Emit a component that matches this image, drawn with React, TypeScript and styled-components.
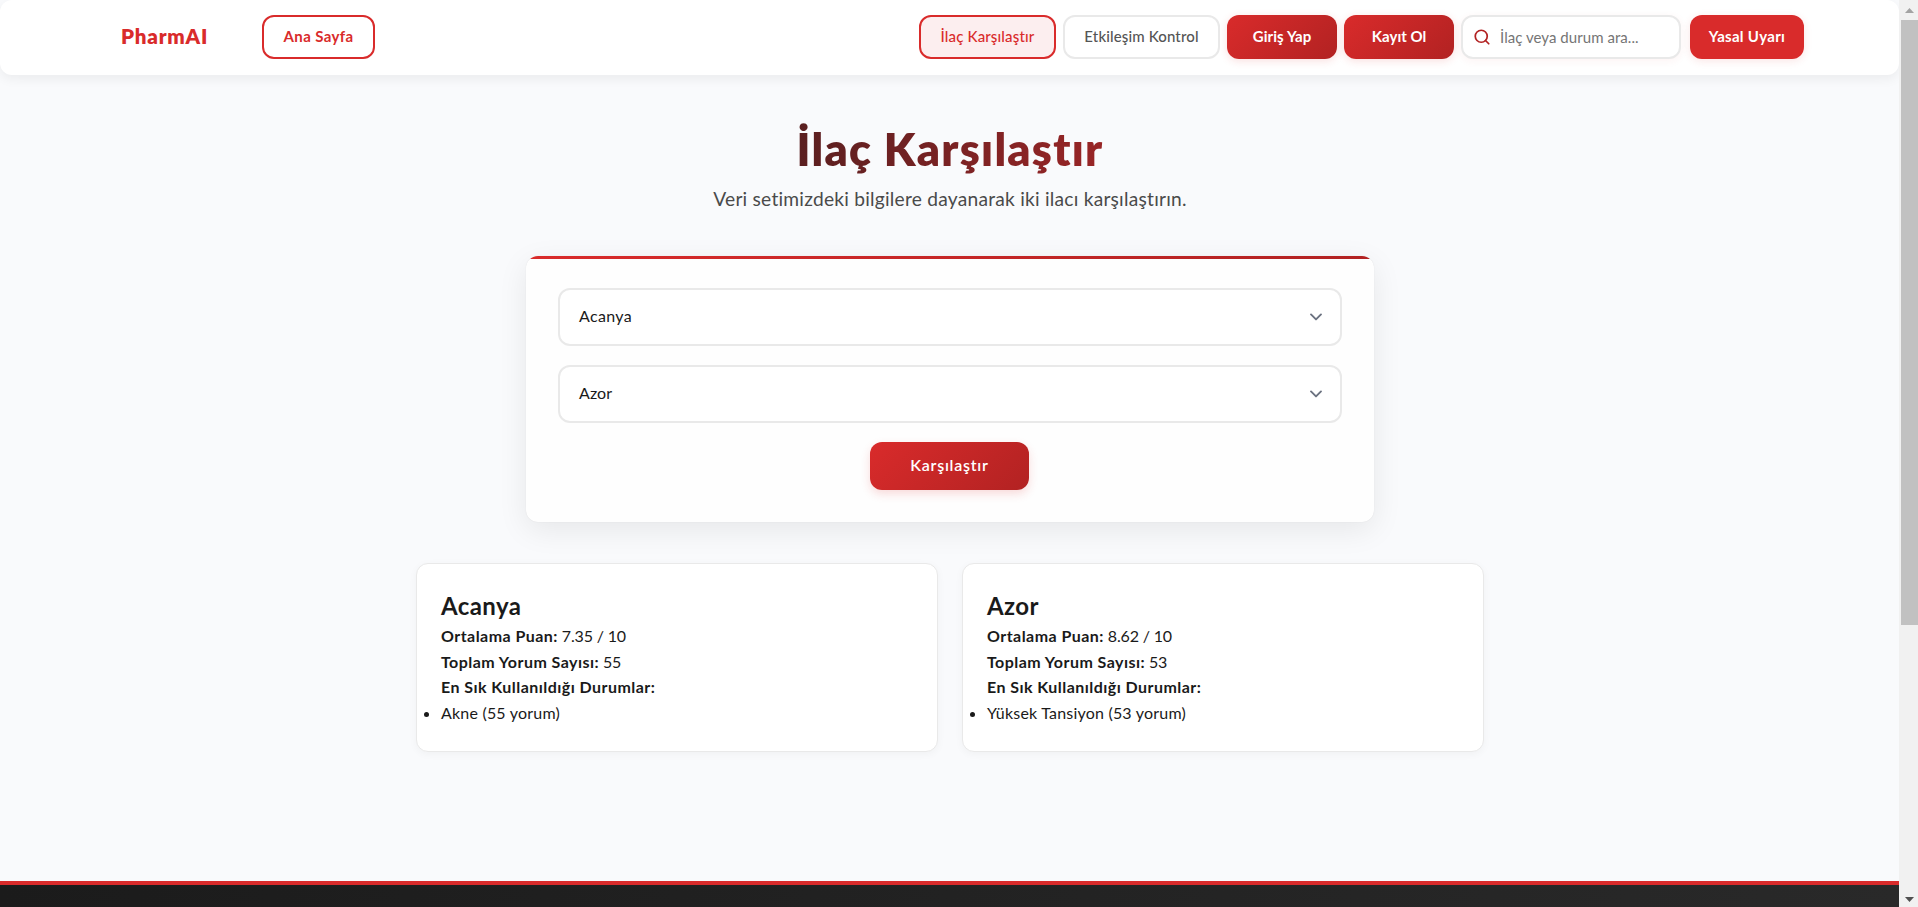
import React from "react";
import styled, { createGlobalStyle, css } from "styled-components";
import { Search } from "lucide-react";

const GlobalStyle = createGlobalStyle`
  *, *::before, *::after { box-sizing: border-box; }
  html, body { margin: 0; padding: 0; overflow: hidden; }
  body {
    background: #f9fafc;
    color: #1a1a1a;
    font-family: Lato, "Open Sans", sans-serif;
    font-size: 16px;
    line-height: 1.6;
    font-variant-ligatures: none;
  }
  h1, h2, p, ul { margin: 0; padding: 0; }
`;

const red = "#d92b2b";
const line = "#e9e9e9";
const redGradient = "linear-gradient(135deg, #d92b2b 0%, #b22222 100%)";

const Shell = styled.div`
  display: grid;
  grid-template-columns: 1fr 19px;
  height: 907px;
`;

const Page = styled.div`
  display: flex;
  flex-direction: column;
  min-width: 0;
  overflow: hidden;
`;

const Header = styled.header`
  flex: none;
  height: 75px;
  padding: 15px 95px 16px 121px;
  display: flex;
  background: #fff;
  border-radius: 12px;
  box-shadow: 0 4px 12px rgba(0, 0, 0, 0.06);
`;

const Brand = styled.div`
  width: 141px;
  padding-bottom: 2px;
  line-height: 42px;
  font-size: 20.5px;
  font-weight: 800;
  letter-spacing: 0.8px;
  color: ${red};
`;

const Nav = styled.nav`
  margin-left: auto;
  display: flex;
  gap: 7px;
`;

type Variant = "outline" | "active" | "plain" | "gradient" | "solid";

const variants = {
  outline: css`border-color: ${red}; color: ${red}; background: #fff; font-weight: 700;`,
  active: css`border-color: ${red}; color: ${red}; background: #fceeef; font-weight: 500;`,
  plain: css`border-color: ${line}; color: #555; background: #fff; font-weight: 500;`,
  gradient: css`border: 0; color: #fff; background: ${redGradient}; font-weight: 700;
    box-shadow: 0 2px 8px rgba(217, 43, 43, 0.15);`,
  solid: css`border: 0; color: #fff; background: ${red}; font-weight: 700;
    box-shadow: 0 2px 8px rgba(217, 43, 43, 0.12);`,
};

const NavButton = styled.button<{ $variant: Variant; $width: number; $track?: number }>`
  width: ${(p) => p.$width}px;
  height: 44px;
  padding: 0 0 3px;
  border: 2px solid transparent;
  border-radius: 12px;
  font-family: inherit;
  font-size: 15px;
  letter-spacing: ${(p) => p.$track ?? 0}px;
  white-space: nowrap;
  ${(p) => variants[p.$variant]}
`;

const SearchBox = styled.label`
  width: 220px;
  height: 44px;
  margin-right: 2px;
  padding: 0 11px 1px 10px;
  display: flex;
  align-items: center;
  gap: 9px;
  border: 2px solid ${line};
  border-radius: 12px;
  background: #fff;
  color: #b22222;
  box-shadow: 0 2px 8px rgba(217, 43, 43, 0.06);
  svg { flex: none; }
`;

const SearchInput = styled.input`
  flex: 1;
  min-width: 0;
  padding: 0;
  border: 0;
  outline: 0;
  background: transparent;
  font: 400 15px Lato, sans-serif;
  letter-spacing: 0.05px;
  &::placeholder { color: #757575; opacity: 1; }
`;

const Main = styled.main`
  flex: none;
  height: 806px;
  padding: 44px 0 0 1px;
  display: flex;
  flex-direction: column;
  align-items: center;
`;

const Title = styled.h1`
  font-size: 45px;
  line-height: 60px;
  font-weight: 800;
  letter-spacing: 1.25px;
  background: linear-gradient(100deg, #591f20 0%, #992526 100%);
  background-clip: text;
  -webkit-background-clip: text;
  color: transparent;
`;

const Subtitle = styled.p`
  margin-top: 5px;
  font-size: 19.2px;
  line-height: 30px;
  letter-spacing: 0.23px;
  color: #4a4a4a;
`;

const FormCard = styled.section`
  width: 848px;
  height: 266px;
  margin-top: 42px;
  padding: 32px;
  display: flex;
  flex-direction: column;
  align-items: center;
  gap: 19px;
  border-radius: 12px;
  background: #fefefe;
  box-shadow: 0 8px 30px rgba(0, 0, 0, 0.08), 0 0 1px rgba(0, 0, 0, 0.12);
  overflow: hidden;
  &::before {
    content: "";
    flex: none;
    align-self: stretch;
    height: 3px;
    margin: -32px -32px 10px;
    background: linear-gradient(90deg, #d92b2b, #b22222);
  }
`;

const SelectBox = styled.div<{ $track: number }>`
  flex: none;
  width: 784px;
  height: 58px;
  padding: 0 14px 2px 19px;
  display: flex;
  align-items: center;
  justify-content: space-between;
  border: 2px solid ${line};
  border-radius: 12px;
  background: #fff;
  letter-spacing: ${(p) => p.$track}px;
`;

const CompareButton = styled.button`
  flex: none;
  width: 159px;
  height: 48px;
  margin-right: 1px;
  padding: 0 0 3px;
  border: 0;
  border-radius: 12px;
  background: ${redGradient};
  box-shadow: 0 4px 10px rgba(217, 43, 43, 0.17);
  color: #fff;
  font-family: inherit;
  font-size: 16px;
  font-weight: 600;
  letter-spacing: 0.75px;
`;

const Results = styled.div`
  margin-top: 41px;
  display: grid;
  grid-template-columns: 522px 522px;
  gap: 24px;
`;

const ResultCard = styled.article`
  height: 189px;
  padding: 24px;
  border: 1px solid ${line};
  border-radius: 12px;
  background: #fff;
  box-shadow: 0 2px 8px rgba(0, 0, 0, 0.04);
`;

const DrugName = styled.h2`
  margin-bottom: -1px;
  font-size: 24px;
  line-height: 36px;
  font-weight: 700;
  letter-spacing: 0.4px;
`;

const Fact = styled.p`
  line-height: 25.6px;
  letter-spacing: -0.15px;
  strong { font-weight: 700; letter-spacing: 0.45px; }
`;

const Conditions = styled.ul`
  line-height: 25.6px;
  letter-spacing: 0.2px;
`;

const Footer = styled.footer`
  flex: 1;
  border-top: 4px solid ${red};
  background: linear-gradient(90deg, #1b1b1b, #292929);
`;

const ScrollTrack = styled.div`
  padding: 8px 0 5px 2px;
  display: flex;
  flex-direction: column;
  align-items: center;
  background: #f1f1f1;
`;

const Thumb = styled.div`
  width: 17px;
  height: 605px;
  margin: 7px 0 auto;
  background: #c1c1c1;
`;

const Arrow = ({ down }: { down?: boolean }) => (
  <svg width="9" height="5" viewBox="0 0 9 5">
    <path d={down ? "M0 0h9L4.5 5z" : "M0 5h9L4.5 0z"} fill={down ? "#505050" : "#a3a3a3"} />
  </svg>
);

const Chevron = () => (
  <svg width="20" height="20" viewBox="0 0 20 20" fill="none">
    <path d="M5 8.4l5 5 5-5" stroke="#6b7280" strokeWidth="1.9" strokeLinecap="round" strokeLinejoin="round" />
  </svg>
);

const drugs = [
  { name: "Acanya", track: 0.33, score: "7.35", reviews: 55, condition: "Akne" },
  { name: "Azor", track: 0.1, score: "8.62", reviews: 53, condition: "Yüksek Tansiyon" },
];

export default function App() {
  return (
    <>
      <GlobalStyle />
      <Shell>
        <Page>
          <Header>
            <Brand>PharmAI</Brand>
            <NavButton $variant="outline" $width={113} $track={0.36}>Ana Sayfa</NavButton>
            <Nav>
              <NavButton $variant="active" $width={137} $track={0.15}>İlaç Karşılaştır</NavButton>
              <NavButton $variant="plain" $width={157} $track={0.13}>Etkileşim Kontrol</NavButton>
              <NavButton $variant="gradient" $width={110} $track={0.08}>Giriş Yap</NavButton>
              <NavButton $variant="gradient" $width={110}>Kayıt Ol</NavButton>
              <SearchBox>
                <Search size={18} strokeWidth={2.3} />
                <SearchInput placeholder="İlaç veya durum ara..." />
              </SearchBox>
              <NavButton $variant="solid" $width={114} $track={0.3}>Yasal Uyarı</NavButton>
            </Nav>
          </Header>
          <Main>
            <Title>İlaç Karşılaştır</Title>
            <Subtitle>Veri setimizdeki bilgilere dayanarak iki ilacı karşılaştırın.</Subtitle>
            <FormCard>
              {drugs.map((d) => (
                <SelectBox key={d.name} $track={d.track}>
                  {d.name}
                  <Chevron />
                </SelectBox>
              ))}
              <CompareButton>Karşılaştır</CompareButton>
            </FormCard>
            <Results>
              {drugs.map((d) => (
                <ResultCard key={d.name}>
                  <DrugName>{d.name}</DrugName>
                  <Fact><strong>Ortalama Puan:</strong> {d.score} / 10</Fact>
                  <Fact><strong>Toplam Yorum Sayısı:</strong> {d.reviews}</Fact>
                  <Fact><strong>En Sık Kullanıldığı Durumlar:</strong></Fact>
                  <Conditions>
                    <li>{d.condition} ({d.reviews} yorum)</li>
                  </Conditions>
                </ResultCard>
              ))}
            </Results>
          </Main>
          <Footer />
        </Page>
        <ScrollTrack>
          <Arrow />
          <Thumb />
          <Arrow down />
        </ScrollTrack>
      </Shell>
    </>
  );
}
